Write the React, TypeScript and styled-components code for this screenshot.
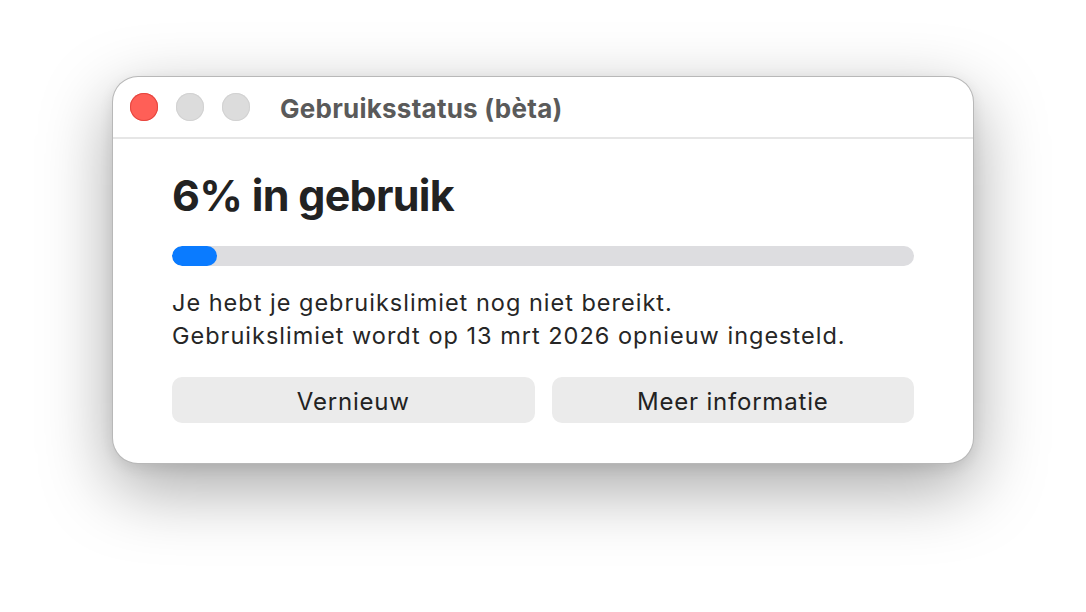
import styled, { createGlobalStyle } from "styled-components";

const GlobalStyle = createGlobalStyle`
  html, body {
    margin: 0;
    padding: 0;
    background: #ffffff;
  }
  * {
    box-sizing: border-box;
  }
`;

const Page = styled.div`
  width: 1086px;
  height: 612px;
  display: flex;
  justify-content: center;
  align-items: flex-start;
  padding-top: 76px;
  font-family: Inter, "Noto Sans", "Liberation Sans", sans-serif;
  overflow: hidden;
`;

const Window = styled.div`
  width: 862px;
  height: 388px;
  background: #ffffff;
  border-radius: 26px;
  border: 1px solid rgba(0, 0, 0, 0.28);
  box-shadow: 0 24px 70px rgba(0, 0, 0, 0.35), 0 4px 14px rgba(0, 0, 0, 0.08);
  display: flex;
  flex-direction: column;
  overflow: hidden;
`;

const TitleBar = styled.div`
  height: 62px;
  flex: none;
  display: flex;
  align-items: center;
  padding-left: 17px;
  border-bottom: 2px solid #e6e6e6;
`;

const Lights = styled.div`
  display: flex;
  gap: 18px;
  margin-right: 30px;
`;

const Light = styled.span<{ $color: string; $ring: string }>`
  width: 28px;
  height: 28px;
  border-radius: 50%;
  background: ${(p) => p.$color};
  box-shadow: inset 0 0 0 1px ${(p) => p.$ring};
`;

const Title = styled.div`
  font-size: 26px;
  font-weight: 700;
  color: #5a5a5a;
  letter-spacing: 0.25px;
  margin-top: 3px;
`;

const Content = styled.div`
  flex: 1;
  display: flex;
  flex-direction: column;
  padding: 30px 59px 0 59px;
`;

const Heading = styled.h1`
  margin: 0;
  font-size: 43px;
  font-weight: 700;
  color: #222222;
  letter-spacing: -0.7px;
  line-height: 52px;
`;

const Track = styled.div`
  margin-top: 25px;
  height: 20px;
  border-radius: 10px;
  background: #dddde0;
  overflow: hidden;
`;

const Fill = styled.div`
  height: 100%;
  border-radius: 10px;
  background: #0a7bff;
`;

const Message = styled.p`
  margin: 20px 0 0 0;
  font-size: 23.5px;
  letter-spacing: 1px;
  line-height: 33px;
  color: #262626;
`;

const Buttons = styled.div`
  margin-top: 25px;
  display: grid;
  grid-template-columns: 1fr 1fr;
  gap: 17px;
`;

const Button = styled.button`
  height: 46px;
  border: none;
  border-radius: 10px;
  background: #ebebeb;
  font-family: inherit;
  font-size: 24px;
  letter-spacing: 0.8px;
  color: #222222;
  padding: 2px 0 0 0;
  cursor: pointer;
`;

export default function App() {
  const used = 6;
  return (
    <>
      <GlobalStyle />
      <Page>
        <Window>
          <TitleBar>
            <Lights>
              <Light $color="#ff5f57" $ring="#e5463f" />
              <Light $color="#dcdcdc" $ring="#d2d2d2" />
              <Light $color="#dcdcdc" $ring="#d2d2d2" />
            </Lights>
            <Title>Gebruiksstatus (bèta)</Title>
          </TitleBar>
          <Content>
            <Heading>{used}% in gebruik</Heading>
            <Track>
              <Fill style={{ width: `${used}%` }} />
            </Track>
            <Message>
              Je hebt je gebruikslimiet nog niet bereikt.
              <br />
              Gebruikslimiet wordt op 13 mrt 2026 opnieuw ingesteld.
            </Message>
            <Buttons>
              <Button>Vernieuw</Button>
              <Button>Meer informatie</Button>
            </Buttons>
          </Content>
        </Window>
      </Page>
    </>
  );
}
